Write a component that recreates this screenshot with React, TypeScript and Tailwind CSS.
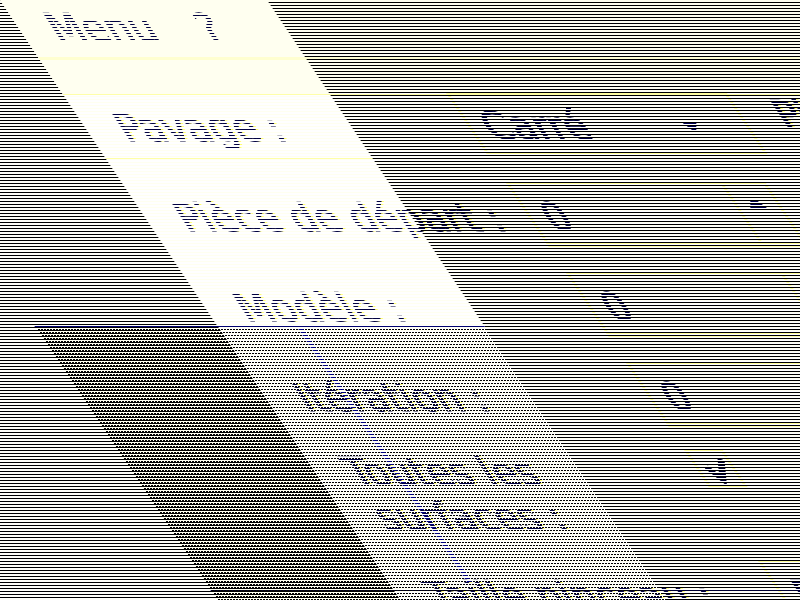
import React from "react";

const field = "h-[63px] w-[260px] border-[3px] border-[#ffff98] bg-transparent";
const ink = "text-[#000040] [text-shadow:3px_0_#ffff70] [-webkit-text-stroke:1px_#000040]";

function SpinRow({ id, label, value, arrow }: { id: string; label: string; value: string; arrow?: boolean }) {
  return (
    <div className="flex items-start">
      <label htmlFor={id} className="w-[351px] shrink-0 whitespace-nowrap pt-[13px]">{label}</label>
      <div className={`${field} flex items-center`}>
        <input id={id} defaultValue={value} className="h-full w-[214px] border-r-[3px] border-[#ffff98] bg-transparent pl-[13px] pt-1 outline-none" />
        {arrow && (
          <svg viewBox="0 0 18 9" className="ml-2.5 mb-5 h-[9px] w-[18px]" fill="#000050">
            <path d="M0 9 6 0h6l6 9z" />
          </svg>
        )}
      </div>
    </div>
  );
}

function Backdrop() {
  return (
    <>
      <div className="absolute inset-0 bg-[repeating-linear-gradient(#000_0_1px,#fffff8_1px_3px)]" />
      <div className="absolute inset-0 origin-top-left skew-x-[33.69deg]">
        <div className="absolute inset-y-0 left-0 w-[1200px] bg-[repeating-linear-gradient(#fffff0_0_1px,#fff_1px_3px)]">
          <div className="h-[95px] border-b border-[#ffffa8] bg-[#fffff0] pt-[57px]">
            <div className="h-[3px] bg-[#ffffd0]" />
          </div>
          <div className="mt-[63px] h-px bg-[#ffffa8]" />
          <div className="ml-[384px] mt-[87px] h-px bg-[#ffffa8]" />
          <div className="ml-[384px] mt-[89px] h-px bg-[#ffffa8]" />
          <div className="ml-[384px] mt-[89px] h-px bg-[#ffffa8]" />
        </div>
        <div className="absolute inset-y-0 left-[267px] w-[1200px] bg-[repeating-linear-gradient(transparent_0_2px,#000_2px_3px)]" />
        <div className="absolute bottom-0 left-[-183px] top-[327px] w-[183px] bg-[repeating-linear-gradient(#000_0_1px,#fffff0_1px_3px)]" />
        <div className="absolute left-[-183px] top-[326px] h-px w-[450px] bg-[#000070]" />
        <div className="absolute left-[-183px] top-[590px] h-px w-[1200px] bg-[#000030]" />
      </div>
      <svg className="absolute inset-0 h-full w-full" shapeRendering="crispEdges" aria-hidden="true">
        <defs>
          <pattern id="halftone" width="3" height="9" patternUnits="userSpaceOnUse">
            <path fill="#000" d="M0 2h2v1H0zM0 5h1v1H0zM2 5h1v1H2zM1 8h2v1H1z" />
          </pattern>
        </defs>
        <path fill="url(#halftone)" d="M36 328H486L667 600H217z" />
      </svg>
      <div className="absolute inset-0 [mask-image:repeating-linear-gradient(transparent_0_2px,#000_2px_3px)]">
        <div className="absolute inset-0 origin-top-left skew-x-[33.69deg]">
          <div className="absolute left-[79px] top-[327px] h-[255px] w-[5px] bg-[#000080]" />
        </div>
      </div>
    </>
  );
}

export default function App() {
  return (
    <main className="relative h-screen w-full overflow-hidden bg-white">
      <Backdrop />
      <div className="absolute inset-0 overflow-hidden [mask-image:repeating-linear-gradient(#000_0_1px,transparent_1px_3px)]">
        <div className={`w-[900px] origin-top-left skew-x-[33.69deg] font-['DejaVu_Sans',sans-serif] text-[38px] leading-[45px] ${ink}`}>
          <nav className="flex h-[93px] gap-[45px] pl-[31px] pt-[6px]">
            <button className="h-[45px]">Menu</button>
            <button className="h-[45px]">?</button>
          </nav>
          <form className="flex flex-col pl-[33px]">
            <div className="flex flex-col gap-[27px]">
              <div className="flex items-start">
                <label htmlFor="tiling" className="w-[351px] shrink-0 pt-[13px]">Pavage :</label>
                <div className="relative">
                  <select id="tiling" className="h-[63px] w-[281px] appearance-none border-[3px] border-[#ffff98] bg-transparent pl-[13px] pt-1 outline-none">
                    <option>Carré</option>
                  </select>
                  <svg viewBox="0 0 15 9" className="pointer-events-none absolute left-[216px] top-[29px] h-[9px] w-[15px]" fill="#000050">
                    <path d="M0 0h15L9 9H6z" />
                  </svg>
                </div>
                <span className="ml-[35px]">Pi</span>
              </div>
              <SpinRow id="start" label="Pièce de départ :" value="0" arrow />
              <SpinRow id="model" label="Modèle :" value="0" />
              <SpinRow id="iteration" label="Itération :" value="0" />
            </div>
            <div className="mt-6 flex h-[90px] items-start">
              <label htmlFor="surfaces" className="w-[351px] shrink-0">Toutes les<br />surfaces :</label>
              <div className="relative">
                <input id="surfaces" type="checkbox" defaultChecked className="block h-[39px] w-[39px] appearance-none border-[3px] border-[#ffff98]" />
                <svg viewBox="0 0 26 26" className="pointer-events-none absolute left-2 top-2 h-[26px] w-[26px]" fill="none" stroke="#000030" strokeWidth="6">
                  <path d="M3 9 11 22 23 1" />
                </svg>
              </div>
            </div>
            <div className="mt-[21px]">
              <SpinRow id="brush" label="Taille pinceau :" value="5" />
            </div>
          </form>
        </div>
      </div>
    </main>
  );
}
